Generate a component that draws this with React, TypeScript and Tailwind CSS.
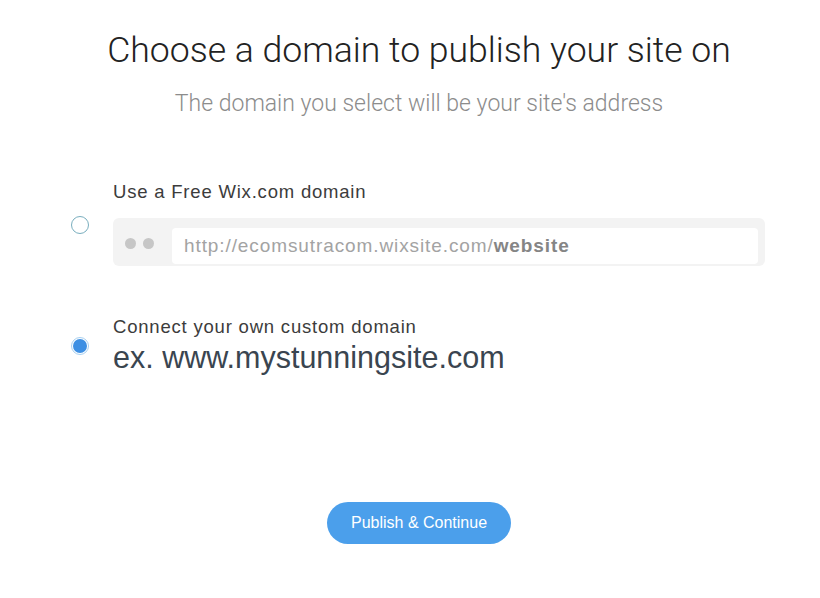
export default function App() {
  return (
    <div className="min-h-[598px] w-full bg-white font-['Liberation_Sans',Arial,sans-serif]">
      <div className="flex flex-col items-center pl-[18px] pt-[28px]">
        <h1 className="font-['Roboto',Arial,sans-serif] text-[35.6px] leading-[44px] font-light text-[#222]">
          Choose a domain to publish your site on
        </h1>
        <p className="mt-[17px] font-['Roboto',Arial,sans-serif] text-[23px] leading-[30px] font-light text-[#8c8c8c]">
          The domain you select will be your site's address
        </p>
      </div>

      <div className="mt-[62px] pl-[71px] pr-[55px]">
        {/* free domain option */}
        <div className="flex gap-[24px]">
          <div className="pt-[35px]">
            <span className="block h-[18px] w-[18px] rounded-full border border-[#79aebe] bg-white" />
          </div>
          <div className="flex-1">
            <div className="text-[18.5px] leading-[22px] tracking-[0.8px] text-[#3c3c3c]">
              Use a Free Wix.com domain
            </div>
            <div className="mt-[15px] flex h-[48px] items-center rounded-[6px] bg-[#f3f3f3] pl-[12px] pr-[7px]">
              <span className="mt-[2px] h-[11px] w-[11px] rounded-full bg-[#c6c6c6]" />
              <span className="ml-[7px] mt-[2px] h-[11px] w-[11px] rounded-full bg-[#c6c6c6]" />
              <div className="ml-[18px] mt-[8px] flex h-[36px] flex-1 items-center rounded-[4px] bg-white px-[12px] text-[19px] tracking-[0.9px] text-[#a3a3a3]">
                http://ecomsutracom.wixsite.com/
                <span className="font-bold text-[#858585]">website</span>
              </div>
            </div>
          </div>
        </div>

        {/* custom domain option */}
        <div className="mt-[50px] flex gap-[24px]">
          <div className="pt-[21px]">
            <span className="flex h-[18px] w-[18px] items-center justify-center rounded-full border border-[#a8d0f0] bg-white">
              <span className="h-[14px] w-[14px] rounded-full bg-[#3d8fe3]" />
            </span>
          </div>
          <div className="flex-1">
            <div className="text-[18.5px] leading-[22px] tracking-[0.8px] text-[#3c3c3c]">
              Connect your own custom domain
            </div>
            <div className="mt-[1px] text-[30.5px] leading-[36px] text-[#3a4550]">
              ex. www.mystunningsite.com
            </div>
          </div>
        </div>
      </div>

      <div className="mt-[127px] flex justify-center pl-[18px]">
        <button className="h-[42px] w-[184px] rounded-full bg-[#4b9feb] text-[16px] text-white">
          Publish &amp; Continue
        </button>
      </div>
    </div>
  );
}
